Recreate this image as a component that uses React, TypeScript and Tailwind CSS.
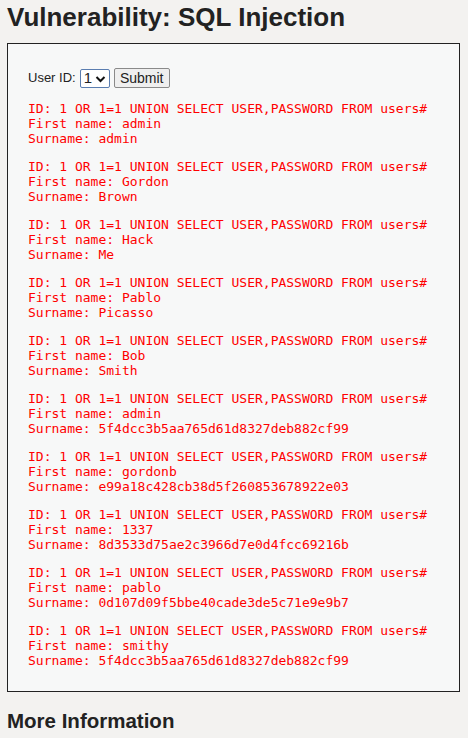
import React from 'react';

const rows = [
  ['admin', 'admin'],
  ['Gordon', 'Brown'],
  ['Hack', 'Me'],
  ['Pablo', 'Picasso'],
  ['Bob', 'Smith'],
  ['admin', '5f4dcc3b5aa765d61d8327deb882cf99'],
  ['gordonb', 'e99a18c428cb38d5f260853678922e03'],
  ['1337', '8d3533d75ae2c3966d7e0d4fcc69216b'],
  ['pablo', '0d107d09f5bbe40cade3de5c71e9e9b7'],
  ['smithy', '5f4dcc3b5aa765d61d8327deb882cf99'],
];

export default function App() {
  return (
    <div className="min-h-[738px] bg-[#f3f2f0] pl-[7px] pr-[8px] pt-[1px] text-[#222] font-['Liberation_Sans',Arial,sans-serif]">
      <h1 className="text-[26px] font-bold leading-[32px] mt-0 mb-[10px]">Vulnerability: SQL Injection</h1>

      {/* vulnerable form + output */}
      <div className="border border-[#222] bg-[#f7f8f8] px-[20px] pt-[24px] pb-[10px]">
        <form className="flex items-center text-[13px]" onSubmit={(e) => e.preventDefault()}>
          <label className="mr-[4px]">User ID:</label>
          <span className="flex h-[19px] w-[30px] items-center justify-between rounded-[2px] border border-[#5a7db0] bg-white pl-[3px] pr-[3px] text-[15px]">
            1
            <svg width="11" height="8" viewBox="0 0 11 8" className="mt-[1px]">
              <path d="M1.5 2l4 4 4-4" fill="none" stroke="#111" strokeWidth="2" />
            </svg>
          </span>
          <button type="submit" className="ml-[4px] h-[20px] w-[56px] rounded-[2px] border border-[#8a8a8a] bg-[#efefef] text-[14px] leading-none">
            Submit
          </button>
        </form>

        {rows.map(([first, sur], i) => (
          <pre key={i} className="my-[13px] text-[13px] leading-[15px] text-[#ff0000] font-['DejaVu_Sans_Mono',monospace]">
            {'ID: 1 OR 1=1 UNION SELECT USER,PASSWORD FROM users#'}
            {'\n'}First name: {first}
            {'\n'}Surname: {sur}
          </pre>
        ))}
      </div>

      <h2 className="mt-[17px] text-[20.5px] font-bold leading-[24px]">More Information</h2>
    </div>
  );
}
